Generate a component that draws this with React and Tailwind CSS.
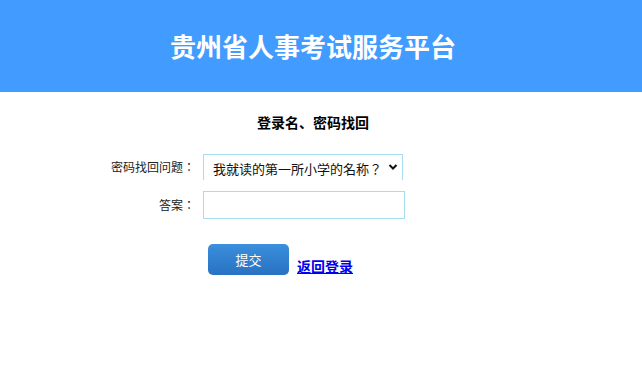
export default function App() {
  const font = { fontFamily: '"Microsoft YaHei", "Noto Sans CJK SC", sans-serif' };
  const jp = { fontFamily: '"Noto Sans CJK JP", "Noto Sans CJK SC", sans-serif' };
  return (
    <div className="min-h-[378px] bg-white" style={font}>
      <div className="flex h-[92px] items-center justify-center bg-[#429bfe] pr-[16px]">
        <h1 className="text-[26px] font-bold leading-none text-white">贵州省人事考试服务平台</h1>
      </div>
      <div className="pt-[21px]">
        <p className="pr-[16px] text-center text-[14px] font-bold leading-[18px] text-black">登录名、密码找回</p>
        <div className="mt-[23px] flex items-center">
          <label className="w-[195px] text-right text-[12px] text-[#222]">密码找回问题<span style={jp}>：</span></label>
          <div className="relative ml-[8px] h-[26px] w-[200px] border border-[#a9dcef]">
            <select className="h-full w-full appearance-none bg-white pl-[9px] text-[13px] text-[#111] outline-none" style={jp}>
              <option>我就读的第一所小学的名称？</option>
            </select>
            <svg className="pointer-events-none absolute right-[4px] top-[8px]" width="10" height="8" viewBox="0 0 10 8">
              <path d="M1.5 2 L5 5.5 L8.5 2" fill="none" stroke="#111" strokeWidth="2" />
            </svg>
          </div>
        </div>
        <div className="mt-[11px] flex items-center">
          <label className="w-[195px] text-right text-[12px] text-[#222]">答案<span style={jp}>：</span></label>
          <input className="ml-[8px] h-[28px] w-[202px] border border-[#a9dcef] outline-none" />
        </div>
        <div className="mt-[25px] flex items-end">
          <button className="ml-[208px] h-[31px] w-[81px] rounded-[5px] bg-gradient-to-b from-[#3b8fdc] to-[#2872c2] text-[13px] text-white" style={font}>提交</button>
          <a href="#" className="ml-[8px] text-[14px] font-bold leading-[18px] text-[#0000ee] underline">返回登录</a>
        </div>
      </div>
    </div>
  );
}
